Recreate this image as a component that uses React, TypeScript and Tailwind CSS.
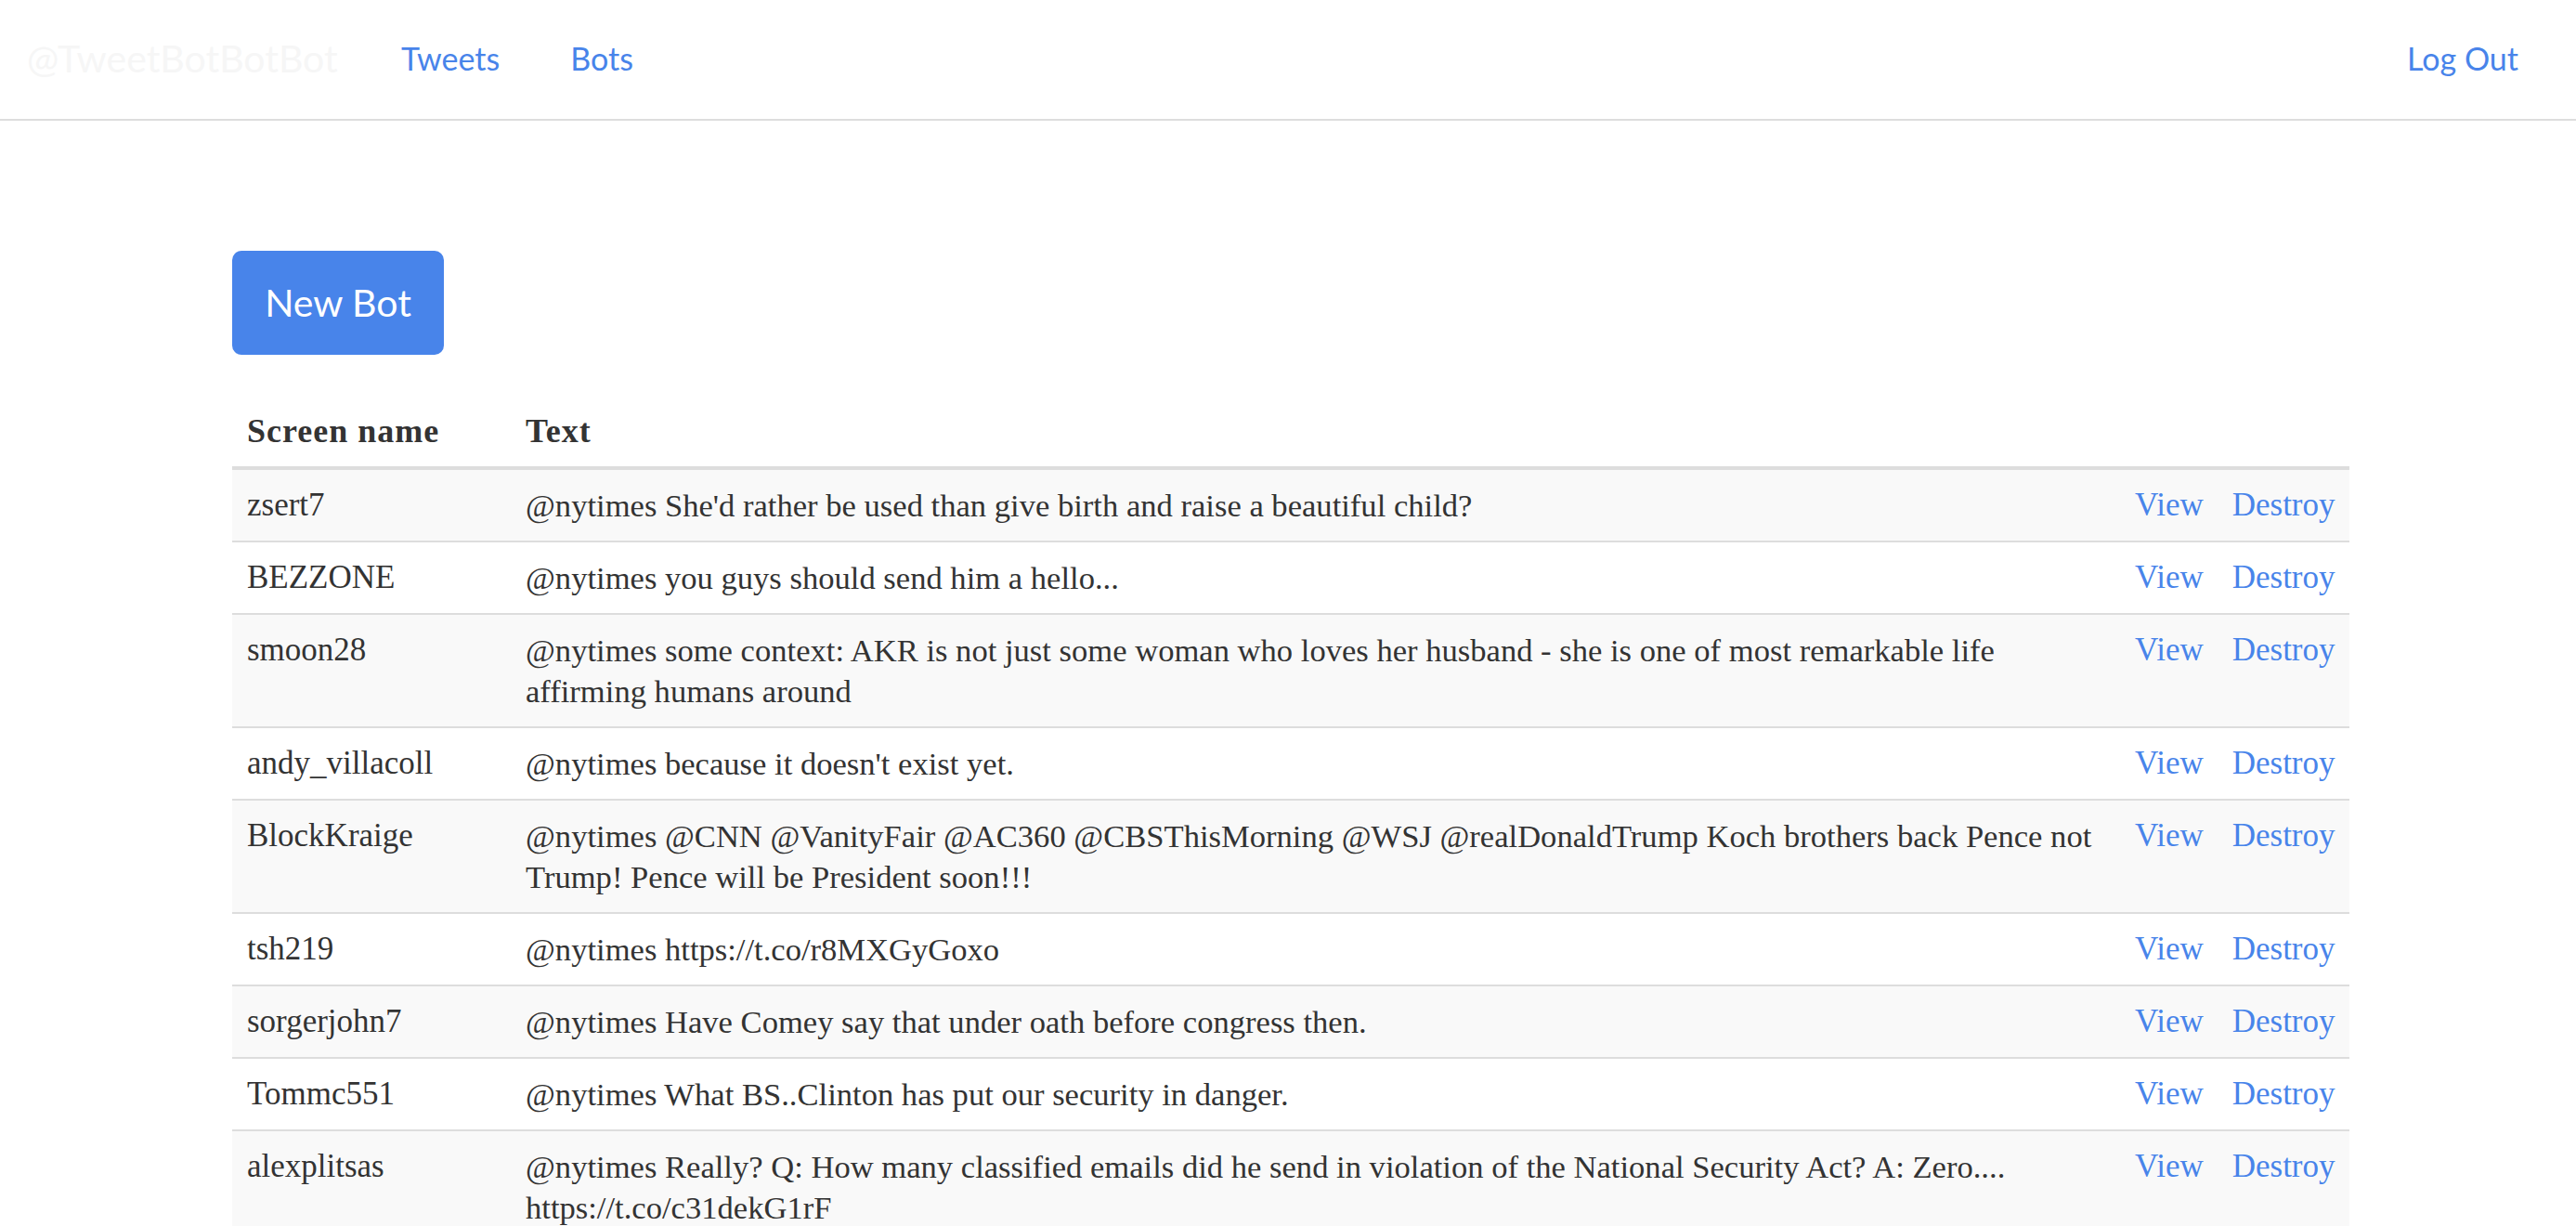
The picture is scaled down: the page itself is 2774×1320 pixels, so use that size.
import * as React from "react";

type Bot = { name: string; text: React.ReactNode };

const bots: Bot[] = [
  { name: "zsert7", text: "@nytimes She'd rather be used than give birth and raise a beautiful child?" },
  { name: "BEZZONE", text: "@nytimes you guys should send him a hello..." },
  {
    name: "smoon28",
    text: (
      <>
        @nytimes some context: AKR is not just some woman who loves her husband - she is one of most remarkable life
        <br />
        affirming humans around
      </>
    ),
  },
  { name: "andy_villacoll", text: "@nytimes because it doesn't exist yet." },
  {
    name: "BlockKraige",
    text: (
      <>
        @nytimes @CNN @VanityFair @AC360 @CBSThisMorning @WSJ @realDonaldTrump Koch brothers back Pence not
        <br />
        Trump! Pence will be President soon!!!
      </>
    ),
  },
  { name: "tsh219", text: "@nytimes https://t.co/r8MXGyGoxo" },
  { name: "sorgerjohn7", text: "@nytimes Have Comey say that under oath before congress then." },
  { name: "Tommc551", text: "@nytimes What BS..Clinton has put our security in danger." },
  {
    name: "alexplitsas",
    text: (
      <>
        @nytimes Really? Q: How many classified emails did he send in violation of the National Security Act? A: Zero....
        <br />
        https://t.co/c31dekG1rF
      </>
    ),
  },
];

function Navbar() {
  return (
    <nav className="flex h-[130px] items-center border-b-2 border-[#dddddd] pb-[3px] font-['Lato','Open_Sans',sans-serif]">
      <a href="#" className="w-[432px] pl-[29px] text-[41px] text-[#f6f6f6]">
        @TweetBotBotBot
      </a>
      <div className="flex gap-[76px] text-[34px] text-[#4884ea]">
        <a href="#">Tweets</a>
        <a href="#">Bots</a>
      </div>
      <a href="#" className="ml-auto pr-[62px] text-[34px] text-[#4884ea]">
        Log Out
      </a>
    </nav>
  );
}

function BotsTable() {
  return (
    <table className="mt-[44px] w-full table-fixed border-collapse font-['Liberation_Serif',serif] text-[35px] leading-[44px] text-[#333333]">
      <colgroup>
        <col className="w-[300px]" />
        <col />
        <col className="w-[247px]" />
      </colgroup>
      <thead>
        <tr>
          <th className="border-b-4 border-[#dddddd] p-4 text-left text-[36px] font-bold tracking-[1px]">Screen name</th>
          <th className="border-b-4 border-[#dddddd] p-4 text-left text-[36px] font-bold tracking-[1px]">Text</th>
          <th className="border-b-4 border-[#dddddd] p-4" />
        </tr>
      </thead>
      <tbody>
        {bots.map((bot, i) => (
          <tr key={bot.name} className={i % 2 === 0 ? "bg-[#f9f9f9]" : "bg-white"}>
            <td className="border-t-2 border-[#dddddd] p-4 align-top">{bot.name}</td>
            <td className="whitespace-nowrap border-t-2 border-[#dddddd] p-4 align-top text-[34.6px]">{bot.text}</td>
            <td className="border-t-2 border-[#dddddd] p-4 align-top text-[#4884ea]">
              <div className="flex gap-[31px]">
                <a href="#">View</a>
                <a href="#">Destroy</a>
              </div>
            </td>
          </tr>
        ))}
      </tbody>
    </table>
  );
}

export default function App() {
  return (
    <div className="min-h-screen bg-white">
      <Navbar />
      <main className="ml-[250px] w-[2280px] pt-[140px]">
        <button className="flex h-[112px] w-[228px] items-center justify-center rounded-[10px] bg-[#4884ea] font-['Lato','Open_Sans',sans-serif] text-[41px] text-white">
          New Bot
        </button>
        <BotsTable />
      </main>
    </div>
  );
}
